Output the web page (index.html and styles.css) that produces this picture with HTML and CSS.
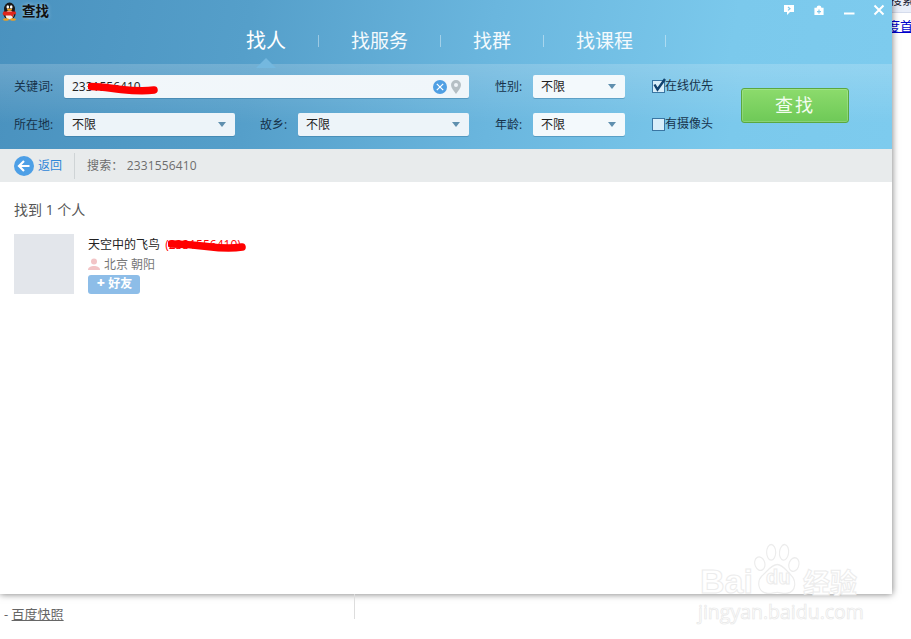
FILE: index.html
```html
<!DOCTYPE html>
<html lang="zh-CN">
<head>
<meta charset="utf-8">
<title>查找</title>
<link rel="stylesheet" href="styles.css">
</head>
<body>
<div class="backdrop-strip"><span class="cut-text">搜索</span></div>
<a class="backdrop-link">度首</a>

<main class="window">
  <header class="head">
    <div class="titlebar">
      <svg class="penguin" width="17" height="19" viewBox="0 0 17 19">
        <ellipse cx="8.5" cy="7" rx="5.5" ry="6.5" fill="#1a1a1a"/>
        <ellipse cx="8.5" cy="12" rx="6" ry="5.5" fill="#1a1a1a"/>
        <ellipse cx="8.5" cy="13" rx="4" ry="4.5" fill="#f4f1ea"/>
        <ellipse cx="6.8" cy="5" rx="1.3" ry="1.8" fill="#fff"/>
        <ellipse cx="10.2" cy="5" rx="1.3" ry="1.8" fill="#fff"/>
        <ellipse cx="8.5" cy="7.6" rx="2.6" ry="1.2" fill="#f0a020"/>
        <path d="M2.5 9.5h12l.5 2.5-3 .8v2.5l-2-1.8H3l-1.5-1.5z" fill="#e0261c"/>
        <ellipse cx="5" cy="17.5" rx="3" ry="1.3" fill="#f0a020"/>
        <ellipse cx="12" cy="17.5" rx="3" ry="1.3" fill="#f0a020"/>
      </svg>
      <h1 class="title">查找</h1>
      <div class="winctl">
        <svg width="12" height="11" viewBox="0 0 12 11"><path d="M1 0h10v7H7L4 10V7H1z" fill="#fff"/><path d="M5 2l2 1.7L5 5.4" fill="none" stroke="#7bc8ec" stroke-width="1.2"/></svg>
        <svg width="12" height="11" viewBox="0 0 12 12"><path d="M3.5 3V2.500a2.500 2 0 0 1 5 0V3H11v8H1V3z" fill="#fff"/><path d="M6 5v4.500M3.800 7.200h4.400" stroke="#7bc8ec" stroke-width="1.200"/></svg>
        <svg width="12" height="12" viewBox="0 0 12 12"><path d="M1 9.500h10.500" stroke="#fff" stroke-width="2"/></svg>
        <svg width="12" height="12" viewBox="0 0 12 12"><path d="M1.500 1.500l9 9M10.500 1.500l-9 9" stroke="#fff" stroke-width="2"/></svg>
      </div>
    </div>
    <nav class="tabs">
      <span class="tab tab-active">找人</span><i class="tab-sep"></i>
      <span class="tab">找服务</span><i class="tab-sep"></i>
      <span class="tab">找群</span><i class="tab-sep"></i>
      <span class="tab">找课程</span><i class="tab-sep"></i>
    </nav>
  </header>

  <section class="filters">
    <label class="flabel">关键词:</label>
    <div class="field keyword">
      <span class="kw-text">2331556410</span>
      <svg class="scribble-a" width="72" height="14" viewBox="0 0 72 14"><path d="M3 4.500c12 0 20 2 30 3s22 2 33 .5" fill="none" stroke="#f00" stroke-width="7.500" stroke-linecap="round"/></svg>
      <svg class="clear" width="14" height="14" viewBox="0 0 14 14"><circle cx="7" cy="7" r="7" fill="#4f9fe3"/><path d="M3.800 3.800l6.400 6.400M10.200 3.800l-6.400 6.400" stroke="#fff" stroke-width="1.200"/></svg>
      <svg width="10" height="14" viewBox="0 0 10 14"><path d="M5 0a5 5 0 0 1 5 5c0 3-3 6-5 9-2-3-5-6-5-9a5 5 0 0 1 5-5z" fill="#b5bfc4"/><circle cx="5" cy="5" r="2" fill="#eef4f8"/></svg>
    </div>
    <label class="flabel lbl-r">性别:</label>
    <div class="field select narrow">不限<i class="caret"></i></div>
    <label class="check"><i class="box box-on"><svg width="15" height="15" viewBox="0 0 15 15"><path d="M2.500 6.500l3 5L13 1" fill="none" stroke="#12426e" stroke-width="2.400"/></svg></i>在线优先</label>
    <button class="search-btn">查找</button>

    <label class="flabel">所在地:</label>
    <div class="field select">不限<i class="caret"></i></div>
    <label class="flabel lbl-mid">故乡:</label>
    <div class="field select">不限<i class="caret"></i></div>
    <label class="flabel lbl-r">年龄:</label>
    <div class="field select narrow">不限<i class="caret"></i></div>
    <label class="check"><i class="box"></i>有摄像头</label>
  </section>

  <div class="crumb">
    <svg width="20" height="20" viewBox="0 0 20 20"><circle cx="10" cy="10" r="10" fill="#4d9fe6"/><path d="M15.500 10H5.500M10 5l-5 5 5 5" fill="none" stroke="#fff" stroke-width="2.200"/></svg>
    <a class="back">返回</a>
    <i class="crumb-sep"></i>
    <span class="query">搜索： 2331556410</span>
  </div>

  <section class="results">
    <p class="count">找到 1 个人</p>
    <article class="person">
      <div class="avatar"></div>
      <div class="info">
        <div class="name">天空中的飞鸟 <span class="uin">(2331556410)<svg class="scribble-b" width="78" height="14" viewBox="0 0 78 14"><path d="M3 5c14 0 24 1 36 2.500s24 2.500 35 .5" fill="none" stroke="#f00" stroke-width="7.500" stroke-linecap="round"/></svg></span></div>
        <div class="place">
          <svg width="12" height="12" viewBox="0 0 12 12"><circle cx="6" cy="3.500" r="3" fill="#f2c4c6"/><path d="M0 12c0-3 3-4 6-4s6 1 6 4z" fill="#f2c4c6"/></svg>
          北京 朝阳
        </div>
        <button class="add"><b class="plus">+</b> 好友</button>
      </div>
    </article>
  </section>

  <div class="watermark">
    <div class="wm-top">
      <span class="wm-bai">Bai</span>
      <svg class="wm-paw" width="50" height="54" viewBox="0 0 66 62" preserveAspectRatio="none" fill="#fff" stroke="#ececec" stroke-width="1.500">
        <ellipse cx="24" cy="13" rx="6" ry="9"/><ellipse cx="41" cy="13" rx="6" ry="9" transform="rotate(8 41 13)"/>
        <ellipse cx="9" cy="26" rx="6.500" ry="8" transform="rotate(-25 9 26)"/><ellipse cx="54" cy="27" rx="6.500" ry="8" transform="rotate(25 54 27)"/>
        <path d="M32 27c7 0 12 7 18 12 7 6 8 19-5 21-5 .8-9-1-13-1s-9 2-14 1C6 58 5 46 12 40c7-5 12-13 20-13z"/>
      </svg>
      <span class="wm-du">du</span>
      <span class="wm-cn">经验</span>
    </div>
    <div class="wm-url">jingyan.baidu.com</div>
  </div>
</main>

<footer class="foot">
  <span class="dash">-</span> <a class="snapshot">百度快照</a>
  <i class="foot-rule"></i>
</footer>
</body>
</html>
```

FILE: styles.css
```css
* { box-sizing: border-box; }
html, body { margin: 0; padding: 0; }
body {
  width: 911px;
  height: 639px;
  overflow: hidden;
  position: relative;
  background: #fff;
  font: 12px/1.2 "Open Sans", "Noto Sans CJK SC", sans-serif;
  color: #333;
}
i { display: block; font-style: normal; }

.backdrop-strip {
  position: absolute; left: 892px; top: 0; width: 19px; height: 13px;
  background: #e9eef9; border-bottom: 1px solid #d5dcec; overflow: hidden;
  font-size: 12px; line-height: 1px; color: #223; white-space: nowrap;
}
.cut-text { margin-left: -2px; }
.backdrop-link {
  position: absolute; left: 887px; top: 18px;
  font-size: 13px; line-height: 16px; color: #00c; text-decoration: underline;
  white-space: nowrap;
}

.window {
  position: relative;
  width: 892px; height: 594px;
  background: #fff;
  box-shadow: 0 0 7px rgba(0, 0, 0, .55);
  display: flex; flex-direction: column;
}

.head {
  height: 64px;
  background: linear-gradient(100deg, #4a92bf 0%, #559fca 28%, #6ab6de 55%, #7bc9ec 82%, #7dcbee 100%);
}
.titlebar { height: 23px; display: flex; align-items: center; padding-left: 1px; }
.penguin { flex: none; }
.title {
  margin: 0 0 0 4px;
  font-size: 13.500px; font-weight: 700; color: #111;
  text-shadow: 0 0 4px rgba(255, 255, 255, .45);
}
.winctl { margin: -3px 7px 0 auto; display: flex; gap: 18px; align-items: center; }

.tabs { height: 41px; display: flex; align-items: center; gap: 32px; padding: 0 0 6px 246px; }
.tab { position: relative; font-size: 19px; line-height: 26px; color: #f4fafd; white-space: nowrap; }
.tab-active { font-size: 20px; color: #fff; }
.tab-active::after {
  content: ""; position: absolute; left: 10px; top: 30px;
  border: 10px solid transparent; border-top: 0; border-bottom-color: #74b8df;
}
.tab-sep { width: 1px; height: 12px; background: rgba(255, 255, 255, .4); }

.filters {
  height: 85px;
  padding: 11px 0 0 14px;
  display: grid;
  grid-template-columns: 50px 171px 63px 171px 64px 92px 116px 108px;
  grid-template-rows: 23px 23px;
  row-gap: 15px;
  align-items: center;
  background:
    linear-gradient(180deg, rgba(255, 255, 255, .18) 0, rgba(255, 255, 255, .1) 30%, rgba(255, 255, 255, 0) 70%),
    linear-gradient(100deg, #4a92bf 0%, #559fca 28%, #6ab6de 55%, #7bc9ec 82%, #7dcbee 100%);
}
.flabel { color: #16324a; padding-top: 2px; }
.lbl-mid { padding-left: 25px; }
.lbl-r { padding-left: 26px; }
.field {
  height: 23px; border-radius: 2px;
  padding-top: 2px;
  background: #edf4f9;
  box-shadow: 0 1px 0 rgba(40, 100, 140, .35);
  display: flex; align-items: center;
  color: #222;
}
.keyword { grid-column: span 3; position: relative; padding: 0 8px 0 8px; background: linear-gradient(90deg, #f2f7fa, #f0f6fa); gap: 4px; }
.kw-text { flex: 1; padding-top: 2px; }
.scribble-a { position: absolute; left: 24px; top: 7px; }
.select { padding: 2px 9px 0 8px; justify-content: space-between; }
.narrow { background: #f3f9fc; }
.caret { width: 0; height: 0; margin-top: -2px; border: 4px solid transparent; border-top: 5px solid #5f8fae; border-bottom: 0; }
.check { display: flex; align-items: center; padding-left: 27px; color: #16324a; white-space: nowrap; }
.box {
  position: relative; flex: none;
  width: 13px; height: 13px;
  border: 1px solid #3a76a3;
  background: #d8eefa;
}
.box svg { position: absolute; left: -1px; top: -3px; }
.search-btn {
  grid-column: 8; grid-row: 1 / span 2;
  height: 35px; width: 108px;
  padding: 1px 0 0; border: 1px solid #5aa83f; border-radius: 3px;
  background: linear-gradient(180deg, #8cdb6c, #6ec957);
  box-shadow: inset 0 0 0 1px rgba(255, 255, 255, .18);
  font: inherit; font-size: 18px; letter-spacing: 2px; color: #f4fdf0;
}

.crumb {
  height: 33px; flex: none;
  background: #e8ebec;
  display: flex; align-items: center;
  padding-left: 14px;
}
.back { margin-left: 4px; padding-top: 2px; color: #2f87d8; }
.crumb-sep { width: 1px; height: 26px; background: #cfd4d6; margin: 0 12px; }
.query { padding-top: 2px; color: #6d6d6d; letter-spacing: .15px; }

.results { padding: 0 14px; flex: 1; }
.count { margin: 19px 0 0; font-size: 14px; line-height: 17px; color: #555; }
.person { display: flex; margin-top: 16px; }
.avatar { width: 60px; height: 60px; background: #e3e6eb; }
.info { margin-left: 14px; display: flex; flex-direction: column; align-items: flex-start; }
.name { height: 20px; line-height: 22px; color: #222; white-space: nowrap; }
.uin { position: relative; margin-left: 2px; color: #f00; }
.scribble-b { position: absolute; left: 3px; top: 3px; }
.place { height: 21px; display: flex; align-items: center; gap: 4px; color: #777; padding-top: 1px; }
.place svg { margin-top: -2px; }
.add {
  width: 52px; height: 19px; margin: 0; padding: 0 0 0 1px;
  border: 0; border-radius: 3px;
  background: #8dbde8;
  font: inherit; font-weight: 600; color: #fff;
}
.plus { font-size: 14px; line-height: 12px; }

.watermark {
  position: absolute; left: 697px; top: 541px; width: 190px;
  color: #fff;
  -webkit-text-stroke: 1px #ececec;
}
.wm-top { position: relative; height: 59px; }
.wm-bai {
  position: absolute; left: 3px; top: 20px;
  font: 700 34px/40px "Liberation Sans", sans-serif;
}
.wm-paw { position: absolute; left: 56px; top: 0; }
.wm-du { position: absolute; left: 69px; top: 25px; font: 700 20px/22px "Liberation Sans", sans-serif; }
.wm-cn { position: absolute; left: 106px; top: 25px; font: 700 27px/32px "Noto Sans CJK SC", sans-serif; }
.wm-url {
  font: 400 19.500px/24px "Open Sans", sans-serif; white-space: nowrap; margin-left: 1px;
  -webkit-text-stroke: .7px #e8e8e8;
}

.foot { position: relative; height: 45px; padding: 12px 0 0 4px; font-size: 13px; color: #666; line-height: 17px; }
.snapshot { text-decoration: underline; }
.foot-rule { position: absolute; left: 354px; top: 0; width: 1px; height: 25px; background: #ddd; }
```
